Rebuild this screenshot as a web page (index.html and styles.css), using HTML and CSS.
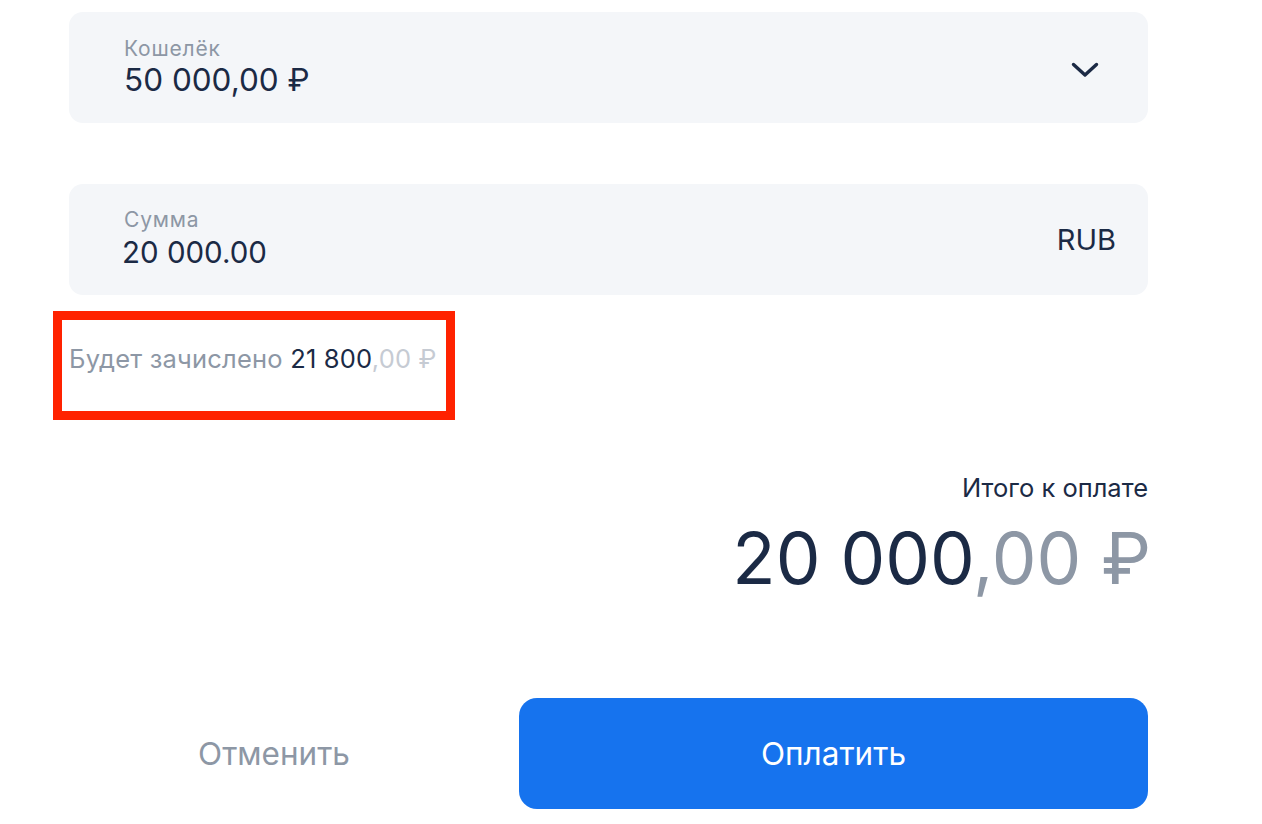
FILE: index.html
```html
<!DOCTYPE html>
<html lang="ru">
<head>
<meta charset="utf-8">
<title>Оплата</title>
<link rel="stylesheet" href="styles.css">
</head>
<body>
<main class="form">
  <div class="field field-select">
    <div class="field-text">
      <span class="label">Кошелёк</span>
      <span class="value">50 000,00 ₽</span>
    </div>
    <svg class="chevron" width="28" height="16" viewBox="0 0 28 16" aria-hidden="true">
      <path d="M2.5 2.5 L14 13 L25.5 2.5" fill="none" stroke="#1b2a45" stroke-width="3.4" stroke-linecap="round" stroke-linejoin="round"/>
    </svg>
  </div>

  <div class="field field-amount">
    <div class="field-text">
      <span class="label">Сумма</span>
      <span class="value value-input">20 000.00</span>
    </div>
    <span class="currency">RUB</span>
  </div>

  <div class="credit-box">
    <span class="credit-label">Будет зачислено</span>
    <span class="credit-int">21 800</span><span class="credit-dec">,00 ₽</span>
  </div>

  <div class="total">
    <div class="total-label">Итого к оплате</div>
    <div class="total-sum"><span class="sum-int">20 000</span><span class="sum-dec">,00 ₽</span></div>
  </div>

  <div class="actions">
    <button class="btn btn-cancel" type="button">Отменить</button>
    <button class="btn btn-pay" type="button">Оплатить</button>
  </div>
</main>
</body>
</html>
```

FILE: styles.css
```css
html, body {
  margin: 0;
  padding: 0;
  background: #ffffff;
}

body {
  font-family: "Inter", "Noto Sans", sans-serif;
  color: #1b2a45;
}

.form {
  width: 1079px;
  margin-left: 69px;
  padding-top: 12px;
  display: flex;
  flex-direction: column;
}

.field {
  height: 111px;
  box-sizing: border-box;
  background: #f4f6f9;
  border-radius: 14px;
  display: flex;
  align-items: center;
  justify-content: space-between;
  padding: 0 49px 0 55px;
}

.field-amount {
  margin-top: 61px;
  padding-right: 32px;
}

.field-text {
  display: flex;
  flex-direction: column;
}

.label {
  font-size: 21px;
  line-height: 24px;
  letter-spacing: 0.8px;
  color: #8d97a5;
}

.value {
  font-size: 31.5px;
  line-height: 38px;
  color: #1b2a45;
}

.value-input {
  margin-left: -2px;
  font-size: 29.5px;
  margin-top: 1px;
}

.chevron {
  display: block;
  margin-top: 4px;
}

.currency {
  font-size: 29px;
  color: #1b2a45;
}

.credit-box {
  margin-top: 16px;
  margin-left: -16px;
  width: 402px;
  height: 109px;
  box-sizing: border-box;
  border: 9px solid #ff2200;
  padding: 23px 0 0 7px;
  font-size: 25.5px;
  line-height: 32px;
  letter-spacing: 0.2px;
  white-space: nowrap;
}

.credit-label {
  color: #8d97a5;
}

.credit-int {
  color: #1b2a45;
}

.credit-dec {
  color: #c6cbd3;
}

.total {
  margin-top: 52px;
  display: flex;
  flex-direction: column;
  align-items: flex-end;
}

.total-label {
  font-size: 25.5px;
  line-height: 32px;
  color: #1b2a45;
}

.total-sum {
  margin-top: 14px;
  margin-right: -3px;
  font-size: 71px;
  line-height: 80px;
  white-space: nowrap;
}

.sum-int {
  color: #1b2a45;
}

.sum-dec {
  color: #8d97a5;
}

.actions {
  margin-top: 100px;
  display: grid;
  grid-template-columns: 410px 629px;
  column-gap: 40px;
}

.btn {
  height: 111px;
  border: 0;
  font-family: inherit;
  font-size: 31.5px;
  cursor: pointer;
}

.btn-cancel {
  background: transparent;
  color: #8d97a5;
}

.btn-pay {
  background: #1673ee;
  color: #ffffff;
  border-radius: 18px;
}
```
